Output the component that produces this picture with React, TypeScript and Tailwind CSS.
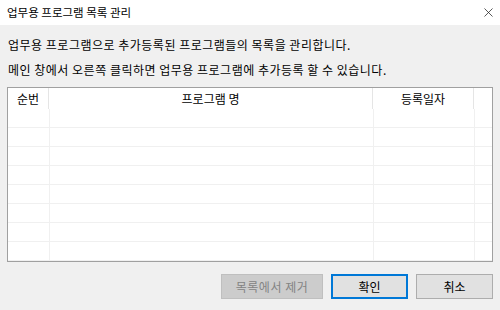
import { X } from 'lucide-react';

const rows = Array.from({ length: 8 });

const App = () => {
  return (
    <div
      className="w-[500px] h-[310px] flex flex-col bg-[#f0f0f0] text-[12px] text-black overflow-hidden"
      style={{ fontFamily: '"Noto Sans CJK KR", "Noto Sans", sans-serif' }}
    >
      {/* title bar */}
      <div className="h-[25px] bg-white flex items-center justify-between pl-[7px] pr-[4px]">
        <span className="leading-none text-[11.5px]">업무용 프로그램 목록 관리</span>
        <X className="w-[15px] h-[15px] text-[#222]" strokeWidth={1.2} />
      </div>

      <div className="flex flex-col px-[7px]">
        {/* description */}
        <div className="pt-[12px] pl-[1px] flex flex-col gap-[9px] leading-[16px] tracking-[0.5px]">
          <p>업무용 프로그램으로 추가등록된 프로그램들의 목록을 관리합니다.</p>
          <p>메인 창에서 오른쪽 클릭하면 업무용 프로그램에 추가등록 할 수 있습니다.</p>
        </div>

        {/* list */}
        <div className="mt-[9px] h-[175px] bg-white border border-[#a0a0a0] flex flex-col overflow-hidden">
          <div className="h-[21px] flex shrink-0">
            <div className="w-[41px] flex items-center justify-center border-r border-[#e5e5e5]">순번</div>
            <div className="w-[324px] flex items-center justify-center border-r border-[#e5e5e5]">
              프로그램 명
            </div>
            <div className="w-[101px] flex items-center justify-center border-r border-[#e5e5e5]">
              등록일자
            </div>
            <div className="flex-1" />
          </div>
          {rows.map((_, i) => (
            <div key={i} className="h-[19px] flex shrink-0 border-b border-[#f0f0f0]">
              <div className="w-[42px] border-r border-[#f0f0f0]" />
              <div className="w-[324px] border-r border-[#f0f0f0]" />
              <div className="w-[101px] border-r border-[#f0f0f0]" />
              <div className="flex-1" />
            </div>
          ))}
        </div>

        {/* buttons */}
        <div className="mt-[12px] flex justify-end gap-[8px]">
          <button
            disabled
            className="w-[102px] h-[25px] bg-[#cccccc] border border-[#bfbfbf] text-[#838383] tracking-[0.5px]"
          >
            목록에서 제거
          </button>
          <button className="w-[77px] h-[25px] bg-[#e1e1e1] border-2 border-[#0078d7]">확인</button>
          <button className="w-[77px] h-[25px] bg-[#e1e1e1] border border-[#adadad]">취소</button>
        </div>
      </div>
    </div>
  );
};

export default App;
